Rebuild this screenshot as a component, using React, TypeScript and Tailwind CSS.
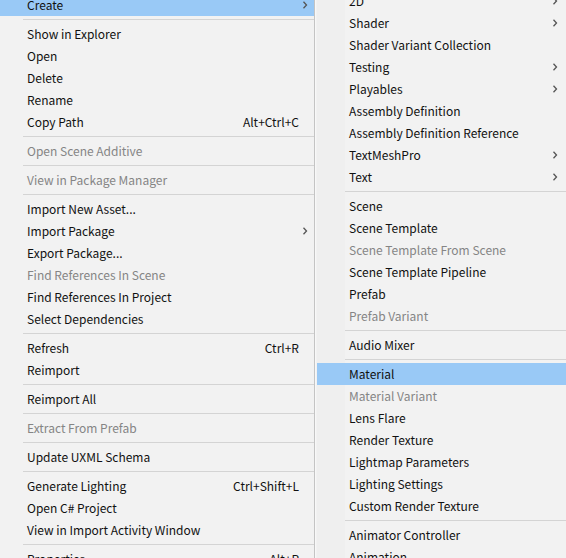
import React from 'react';

type Item =
  | { sep: true }
  | { label: string; shortcut?: string; arrow?: boolean; disabled?: boolean; active?: boolean };

const leftItems: Item[] = [
  { label: 'Create', arrow: true, active: true },
  { sep: true },
  { label: 'Show in Explorer' },
  { label: 'Open' },
  { label: 'Delete' },
  { label: 'Rename' },
  { label: 'Copy Path', shortcut: 'Alt+Ctrl+C' },
  { sep: true },
  { label: 'Open Scene Additive', disabled: true },
  { sep: true },
  { label: 'View in Package Manager', disabled: true },
  { sep: true },
  { label: 'Import New Asset...' },
  { label: 'Import Package', arrow: true },
  { label: 'Export Package...' },
  { label: 'Find References In Scene', disabled: true },
  { label: 'Find References In Project' },
  { label: 'Select Dependencies' },
  { sep: true },
  { label: 'Refresh', shortcut: 'Ctrl+R' },
  { label: 'Reimport' },
  { sep: true },
  { label: 'Reimport All' },
  { sep: true },
  { label: 'Extract From Prefab', disabled: true },
  { sep: true },
  { label: 'Update UXML Schema' },
  { sep: true },
  { label: 'Generate Lighting', shortcut: 'Ctrl+Shift+L' },
  { label: 'Open C# Project' },
  { label: 'View in Import Activity Window' },
  { sep: true },
  { label: 'Properties...', shortcut: 'Alt+P' },
];

const rightItems: Item[] = [
  { label: '2D', arrow: true },
  { label: 'Shader', arrow: true },
  { label: 'Shader Variant Collection' },
  { label: 'Testing', arrow: true },
  { label: 'Playables', arrow: true },
  { label: 'Assembly Definition' },
  { label: 'Assembly Definition Reference' },
  { label: 'TextMeshPro', arrow: true },
  { label: 'Text', arrow: true },
  { sep: true },
  { label: 'Scene' },
  { label: 'Scene Template' },
  { label: 'Scene Template From Scene', disabled: true },
  { label: 'Scene Template Pipeline' },
  { label: 'Prefab' },
  { label: 'Prefab Variant', disabled: true },
  { sep: true },
  { label: 'Audio Mixer' },
  { sep: true },
  { label: 'Material', active: true },
  { label: 'Material Variant', disabled: true },
  { label: 'Lens Flare' },
  { label: 'Render Texture' },
  { label: 'Lightmap Parameters' },
  { label: 'Lighting Settings' },
  { label: 'Custom Render Texture' },
  { sep: true },
  { label: 'Animator Controller' },
  { label: 'Animation' },
];

function Chevron() {
  return (
    <svg width="6" height="8" viewBox="0 0 6 8" className="shrink-0">
      <polyline points="1.5,0.8 4.5,4 1.5,7.2" fill="none" stroke="#555" strokeWidth="1.3" />
    </svg>
  );
}

function Menu({ items, gutter, shortcutRight, arrowRight }: { items: Item[]; gutter: number; shortcutRight: number; arrowRight: number }) {
  return (
    <div className="flex flex-col">
      {items.map((it, i) => {
        if ('sep' in it) {
          return (
            <div key={i} className="h-[7px] pt-[3px]" style={{ paddingLeft: gutter - 4 }}>
              <div className="border-t border-[#d4d4d4]" />
            </div>
          );
        }
        return (
          <div
            key={i}
            className={`relative flex h-[22px] shrink-0 items-center ${it.active ? 'bg-[#99c9f6]' : ''} ${it.disabled ? 'text-[#858585]' : 'text-[#111]'}`}
            style={{ paddingLeft: gutter }}
          >
            <span className="whitespace-nowrap">{it.label}</span>
            {it.shortcut && (
              <span className="absolute whitespace-nowrap" style={{ right: shortcutRight }}>
                {it.shortcut}
              </span>
            )}
            {it.arrow && (
              <span className="absolute flex items-center" style={{ right: arrowRight }}>
                <Chevron />
              </span>
            )}
          </div>
        );
      })}
    </div>
  );
}

export default function App() {
  return (
    <div
      className="flex h-[558px] w-[566px] overflow-hidden bg-[#f2f2f2] text-[12px]"
      style={{ fontFamily: '"Noto Sans CJK KR", "Noto Sans", sans-serif' }}
    >
      <div className="mt-[-6px] w-[315px] shrink-0 border-r border-[#c4c4c4]">
        <Menu items={leftItems} gutter={27} shortcutRight={15} arrowRight={6} />
      </div>
      <div className="mt-[-10px] flex-1 border-l border-[#f8f8f8] pl-[1px]">
        <div className="bg-[linear-gradient(to_right,#efefef_28px,#f2f2f2_28px)]">
          <Menu items={rightItems} gutter={32} shortcutRight={15} arrowRight={8} />
        </div>
      </div>
    </div>
  );
}
